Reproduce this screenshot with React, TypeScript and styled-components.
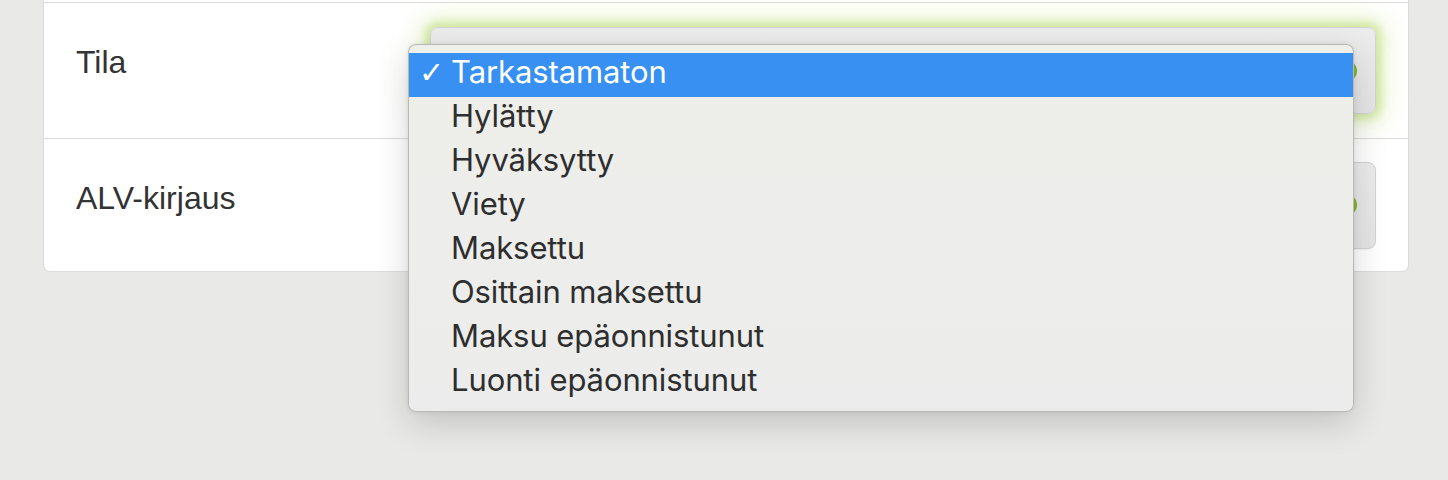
import React from "react";
import styled, { createGlobalStyle } from "styled-components";

const Global = createGlobalStyle`
  html, body { margin: 0; padding: 0; }
  body {
    background: #e9e9e8;
    font-family: "Liberation Sans", Arial, sans-serif;
    color: #333;
  }
`;

const Page = styled.div`
  position: relative;
  width: 1448px;
  height: 480px;
  overflow: hidden;
  padding-left: 43px;
  box-sizing: border-box;
`;

const Card = styled.div`
  width: 1366px;
  box-sizing: border-box;
  background: #fff;
  border: 1px solid #dcdcdc;
  border-top: none;
  border-radius: 0 0 7px 7px;
  padding-top: 2px;
`;

const Row = styled.div<{ $h: number }>`
  display: grid;
  grid-template-columns: 354px 1fr;
  align-items: center;
  height: ${(p) => p.$h}px;
  box-sizing: border-box;
  border-top: 1px solid #dcdcdc;
  padding: 0 32px;
`;

const Label = styled.div<{ $shift: number }>`
  font-size: 32px;
  line-height: 36px;
  color: #333;
  margin-top: ${(p) => p.$shift}px;
`;

const SelectBox = styled.div<{ $focus?: boolean }>`
  display: flex;
  align-items: center;
  justify-content: flex-end;
  padding-right: 18px;
  height: 87px;
  box-sizing: border-box;
  border-radius: 8px;
  border: 1.5px solid #d3d3d3;
  background: linear-gradient(#ececec, #e5e5e5);
  box-shadow: ${(p) =>
    p.$focus
      ? "0 0 8px 5px rgba(185, 218, 110, 0.55), 0 0 24px 12px rgba(205, 230, 150, 0.35)"
      : "0 1px 1px rgba(0,0,0,0.05)"};
`;

const Knob = styled.span`
  width: 22px;
  height: 22px;
  border-radius: 50%;
  background: #86b72e;
`;

const Menu = styled.ul`
  position: absolute;
  left: 408px;
  top: 44px;
  width: 946px;
  height: 368px;
  box-sizing: border-box;
  margin: 0;
  padding: 8px 0 0;
  list-style: none;
  background: linear-gradient(#eeeeea, #ececec);
  border: 1px solid rgba(0, 0, 0, 0.22);
  border-radius: 8px;
  box-shadow: 0 12px 34px rgba(0, 0, 0, 0.16), 0 0 5px rgba(0, 0, 0, 0.08);
  font-family: Inter, "Noto Sans", sans-serif;
`;

const Item = styled.li<{ $active?: boolean }>`
  display: grid;
  grid-template-columns: 42px 1fr;
  height: 44px;
  line-height: 38px;
  font-size: 31px;
  letter-spacing: -0.1px;
  color: ${(p) => (p.$active ? "#fff" : "#2e2e2e")};
  background: ${(p) => (p.$active ? "#3790f2" : "transparent")};
`;

const Check = styled.span`
  padding-left: 10px;
  padding-top: 1px;
  font-size: 30px;
  font-family: "DejaVu Sans", sans-serif;
`;

const options = [
  "Tarkastamaton",
  "Hylätty",
  "Hyväksytty",
  "Viety",
  "Maksettu",
  "Osittain maksettu",
  "Maksu epäonnistunut",
  "Luonti epäonnistunut",
];

export default function App() {
  return (
    <>
      <Global />
      <Page>
        <Card>
          <Row $h={136}>
            <Label $shift={-18}>Tila</Label>
            <SelectBox $focus>
              <Knob />
            </SelectBox>
          </Row>
          <Row $h={133}>
            <Label $shift={-14}>ALV-kirjaus</Label>
            <SelectBox>
              <Knob />
            </SelectBox>
          </Row>
        </Card>
        <Menu>
          {options.map((o, i) => (
            <Item key={o} $active={i === 0}>
              <Check>{i === 0 ? "✓" : ""}</Check>
              <span>{o}</span>
            </Item>
          ))}
        </Menu>
      </Page>
    </>
  );
}
